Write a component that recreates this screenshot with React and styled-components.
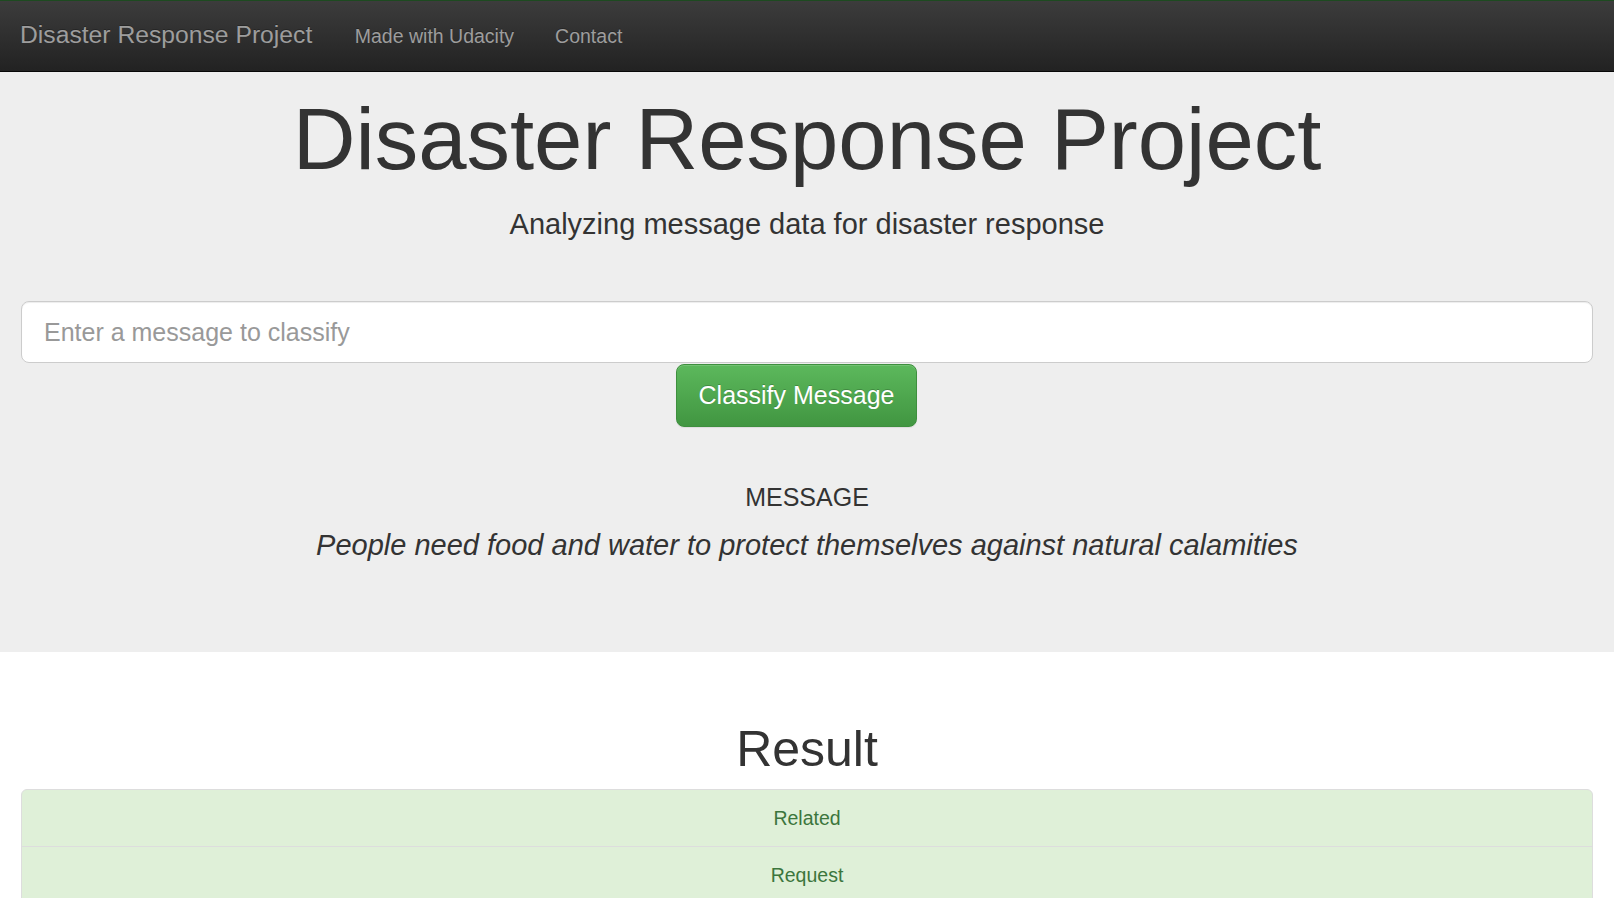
import React from "react";
import styled, { createGlobalStyle } from "styled-components";

const GlobalStyle = createGlobalStyle`
  html, body { margin: 0; padding: 0; background: #fff; }
  body {
    font-family: "Liberation Sans", Arial, Helvetica, sans-serif;
    color: #333;
  }
  * { box-sizing: border-box; }
`;

const NavBar = styled.nav`
  height: 72px;
  border-top: 1px solid #1d4a20;
  border-bottom: 1px solid #080808;
  background: linear-gradient(to bottom, #3c3c3c 0%, #222 100%);
  display: flex;
  align-items: center;
  padding: 0 0 2px 20px;
`;

const Brand = styled.a`
  font-size: 24.7px;
  line-height: 28px;
  color: #9d9d9d;
  text-decoration: none;
  padding-right: 22px;
  text-shadow: 0 -1px 0 rgba(0, 0, 0, 0.25);
`;

const NavLink = styled.a`
  font-size: 19.5px;
  line-height: 28px;
  color: #9d9d9d;
  text-decoration: none;
  padding: 2px 20.5px 0;
  text-shadow: 0 -1px 0 rgba(0, 0, 0, 0.25);
`;

const Jumbotron = styled.section`
  background: #eee;
  padding: 19px 0 91px;
`;

const Container = styled.div`
  padding: 0 21px;
`;

const Title = styled.h1`
  margin: 0;
  font-size: 86.9px;
  line-height: 96px;
  font-weight: 400;
  text-align: center;
  color: #333;
`;

const Lead = styled.p`
  margin: 17px 0 0;
  font-size: 29px;
  line-height: 41px;
  text-align: center;
`;

const MessageInput = styled.input`
  display: block;
  width: 100%;
  height: 62px;
  margin-top: 56px;
  padding: 0 22px;
  font-family: inherit;
  font-size: 25px;
  color: #555;
  background: #fff;
  border: 1px solid #ccc;
  border-radius: 8px;
  box-shadow: inset 0 1px 1px rgba(0, 0, 0, 0.075);
  outline: none;
  &::placeholder { color: #999; }
`;

const ButtonRow = styled.div`
  display: flex;
  justify-content: center;
  padding-right: 21px;
  margin-top: 1px;
`;

const SuccessButton = styled.button`
  height: 63px;
  padding: 0 22px;
  font-family: inherit;
  font-size: 25px;
  color: #fff;
  background: linear-gradient(to bottom, #5cb85c 0%, #419641 100%);
  border: 1px solid #3e8f3e;
  border-radius: 8px;
  text-shadow: 0 -1px 0 rgba(0, 0, 0, 0.2);
  box-shadow: inset 0 1px 0 rgba(255, 255, 255, 0.15), 0 1px 1px rgba(0, 0, 0, 0.075);
  cursor: pointer;
`;

const Label = styled.h4`
  margin: 56px 0 0;
  font-size: 25px;
  line-height: 28px;
  font-weight: 400;
  text-align: center;
`;

const Quote = styled.p`
  margin: 18px 0 0;
  font-size: 29px;
  line-height: 32px;
  font-style: italic;
  text-align: center;
`;

const ResultTitle = styled.h1`
  margin: 70px 0 12px;
  font-size: 50px;
  line-height: 55px;
  font-weight: 400;
  text-align: center;
`;

const List = styled.ul`
  list-style: none;
  margin: 0;
  padding: 0;
`;

const Item = styled.li`
  padding: 14px 21px;
  margin-bottom: -1px;
  font-size: 19.5px;
  line-height: 28px;
  text-align: center;
  color: #3c763d;
  background: #dff0d8;
  border: 1px solid #ddd;
  &:first-child {
    border-top-left-radius: 6px;
    border-top-right-radius: 6px;
  }
`;

const results = ["Related", "Request", "Offer", "Aid Related"];

export default function App() {
  return (
    <>
      <GlobalStyle />
      <NavBar>
        <Brand href="#">Disaster Response Project</Brand>
        <NavLink href="#">Made with Udacity</NavLink>
        <NavLink href="#">Contact</NavLink>
      </NavBar>
      <Jumbotron>
        <Container>
          <Title>Disaster Response Project</Title>
          <Lead>Analyzing message data for disaster response</Lead>
          <MessageInput placeholder="Enter a message to classify" />
          <ButtonRow>
            <SuccessButton type="button">Classify Message</SuccessButton>
          </ButtonRow>
          <Label>MESSAGE</Label>
          <Quote>People need food and water to protect themselves against natural calamities</Quote>
        </Container>
      </Jumbotron>
      <Container>
        <ResultTitle>Result</ResultTitle>
        <List>
          {results.map((r) => (
            <Item key={r}>{r}</Item>
          ))}
        </List>
      </Container>
    </>
  );
}
